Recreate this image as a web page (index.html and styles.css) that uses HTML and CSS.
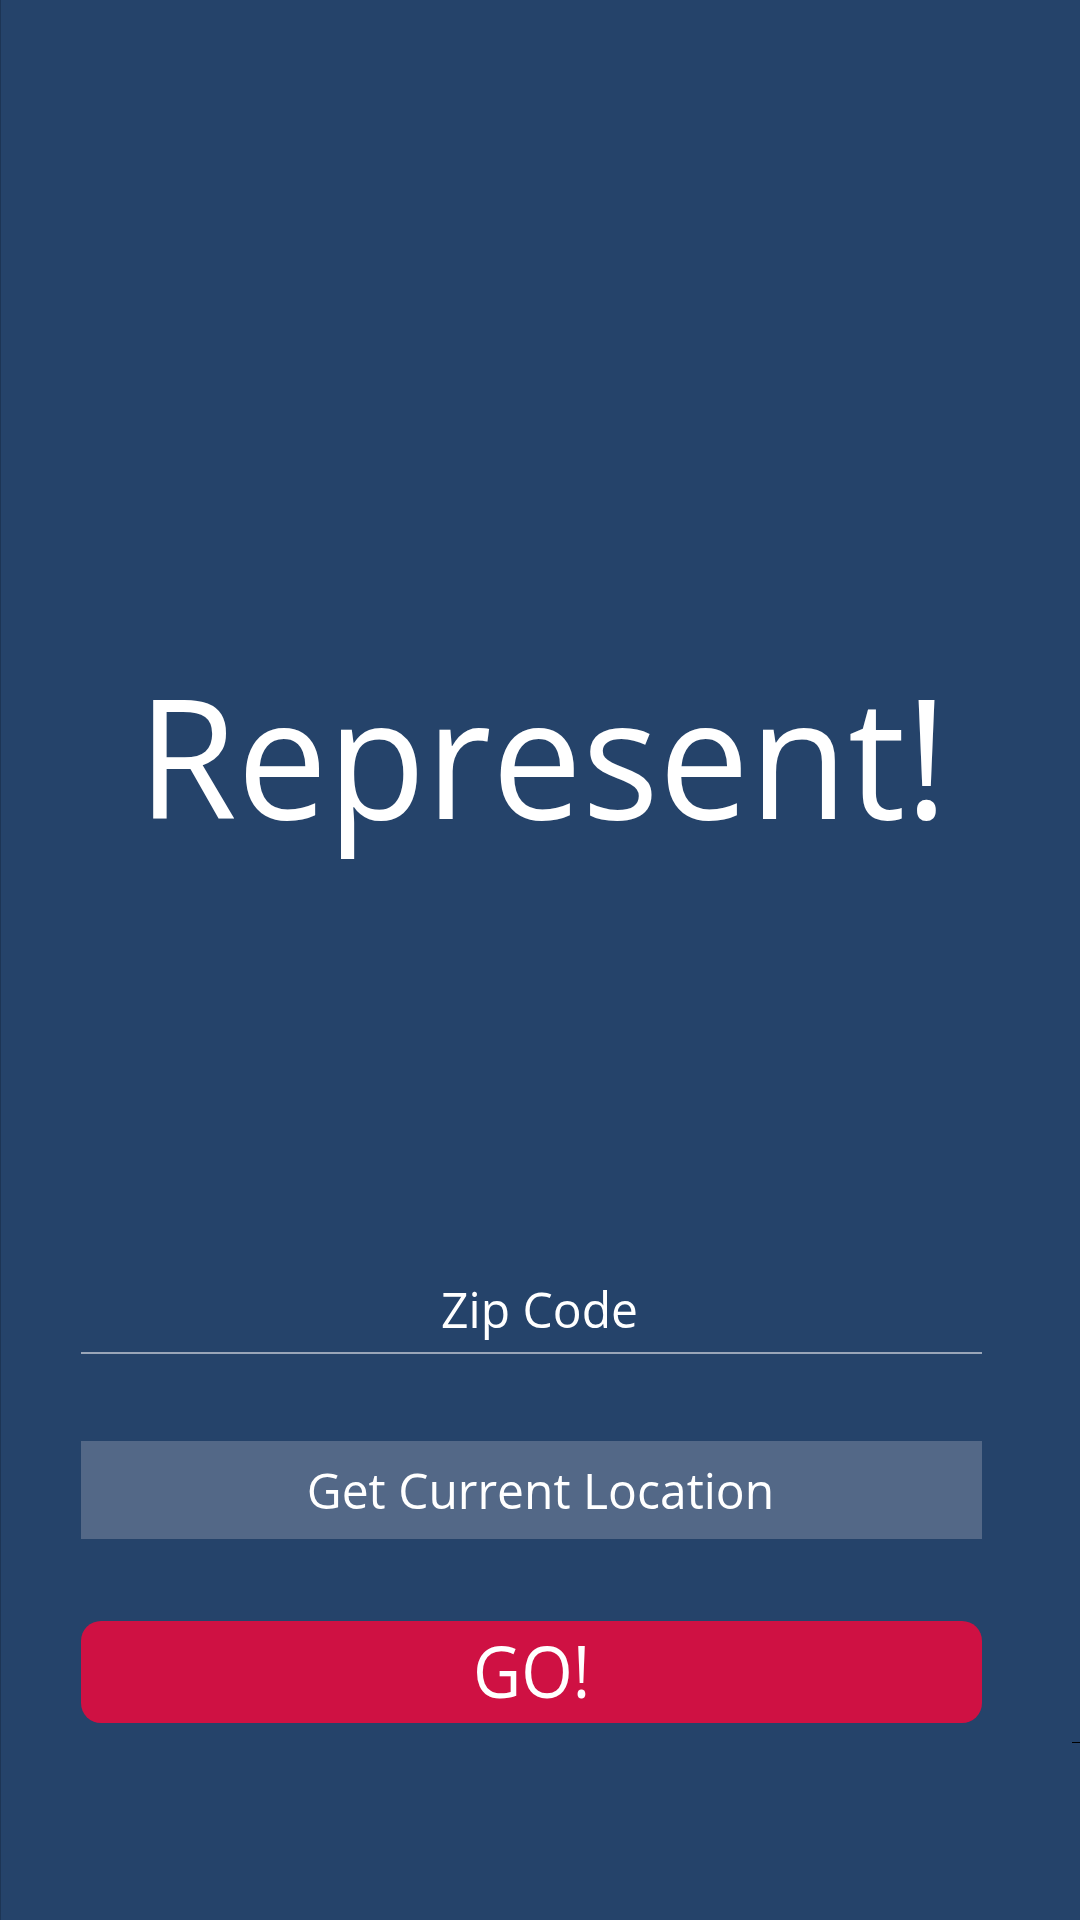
FILE: index.html
```html
<!DOCTYPE html>
<html lang="en">
<head>
<meta charset="utf-8">
<title>Represent!</title>
<link rel="stylesheet" href="styles.css">
</head>
<body>
<main class="screen">
  <h1 class="title"><span class="narrow title-text">Represent!</span></h1>
  <div class="form">
    <div class="zip-field"><span class="narrow zip-placeholder">Zip Code</span></div>
    <div class="btn-location"><span class="narrow loc-text">Get Current Location</span></div>
    <div class="btn-go"><span class="narrow go-text">GO!</span></div>
  </div>
  <span class="edge-tick"></span>
</main>
</body>
</html>
```

FILE: styles.css
```css
html, body {
  margin: 0;
  padding: 0;
  background: #25436a;
}

.screen {
  position: relative;
  box-sizing: border-box;
  width: 1080px;
  height: 1920px;
  border-left: 1px solid #1d3555;
  background: #25436a;
  font-family: "Open Sans", "Noto Sans", sans-serif;
  color: #ffffff;
  display: flex;
  flex-direction: column;
  padding-top: 656px;
}

.narrow {
  display: inline-block;
  transform-origin: center center;
}

.title {
  margin: 0;
  font-size: 166px;
  font-weight: 400;
  line-height: 1.2;
  text-align: center;
  padding-left: 4px;
}

.title-text {
  transform: scaleX(0.97);
}

.form {
  display: flex;
  flex-direction: column;
  margin: 424px 98px 0 80px;
}

.zip-field {
  border-bottom: 2px solid #9aa6b8;
  padding: 0 0 13px 16px;
  text-align: center;
  font-size: 50px;
  line-height: 1.2;
}

.zip-placeholder {
  transform: scaleX(0.96);
}

.btn-location {
  margin-top: 87px;
  height: 98px;
  background: #536887;
  display: flex;
  align-items: center;
  justify-content: center;
  padding-left: 17px;
  font-size: 50px;
}

.loc-text {
  transform: scaleX(0.96);
}

.btn-go {
  margin-top: 82px;
  height: 102px;
  background: #cf1143;
  border-radius: 20px;
  display: flex;
  align-items: center;
  justify-content: center;
  font-size: 72px;
  padding-bottom: 4px;
  box-sizing: border-box;
}

.go-text {
  transform: scaleX(0.92);
}

.edge-tick {
  position: absolute;
  right: 0;
  top: 1742px;
  width: 8px;
  height: 1px;
  background: #000000;
}
```
